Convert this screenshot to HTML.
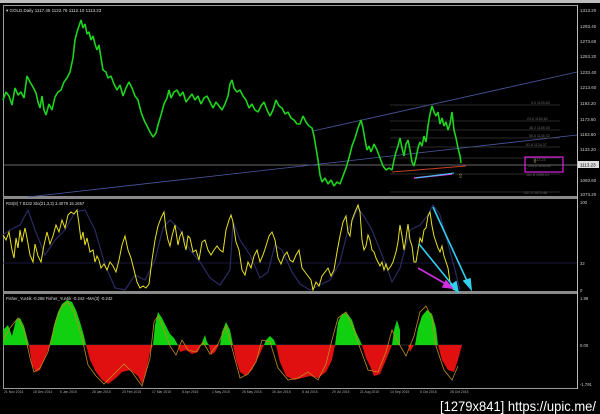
<!DOCTYPE html>
<html><head><meta charset="utf-8"><style>
html,body{margin:0;padding:0;background:#000;width:600px;height:414px;overflow:hidden}
svg{display:block}
text{font-family:"Liberation Sans",sans-serif}
</style></head><body>
<svg width="600" height="414" viewBox="0 0 600 414" xmlns="http://www.w3.org/2000/svg">
<rect width="600" height="414" fill="#000"/>
<rect x="0" y="0" width="600" height="3" fill="#bdbdbd"/>
<rect x="3.5" y="5.5" width="574" height="383" fill="none" stroke="#9a9a9a" stroke-width="1"/>
<rect x="3" y="196" width="575" height="3" fill="#8a8a8a"/>
<rect x="3" y="291" width="575" height="3" fill="#8a8a8a"/>
<line x1="577.5" y1="5" x2="577.5" y2="389" stroke="#bbb"/>

<text x="6" y="12" fill="#ddd" font-size="4.5">▾ GOLD,Daily  1117.45  1122.76  1112.10  1113.23</text>
<line x1="3" y1="165" x2="577" y2="165" stroke="#8a8a8a" stroke-width="0.8"/>
<line x1="28" y1="197" x2="577" y2="135" stroke="#4a5aa0" stroke-width="0.8"/>
<line x1="313" y1="131" x2="577" y2="72" stroke="#4a5aa0" stroke-width="0.8"/>
<g stroke="#555" stroke-width="0.6">
<line x1="390" y1="105" x2="560" y2="105"/><line x1="390" y1="121" x2="560" y2="121"/>
<line x1="390" y1="130" x2="560" y2="130"/><line x1="390" y1="138" x2="560" y2="138"/>
<line x1="390" y1="147" x2="560" y2="147"/><line x1="390" y1="158" x2="560" y2="158"/>
<line x1="390" y1="174" x2="560" y2="174"/><line x1="390" y1="192" x2="560" y2="192"/>
</g>
<g fill="#6a6a6a" font-size="3.6">
<text x="531" y="104">0.0  1193.83</text><text x="527" y="120">23.6  1163.62</text>
<text x="529" y="129">38.2  1155.00</text><text x="529" y="137">50.0  1145.32</text>
<text x="526" y="146">61.8  1134.37</text><text x="533" y="161">1113.23</text>
<text x="528" y="167">100.0  1103.09</text><text x="526" y="176">161.8  1090.21</text>
<text x="524" y="194">127.2  1071.46</text>
</g>
<line x1="392" y1="172" x2="466" y2="166" stroke="#c0402a" stroke-width="1"/>
<line x1="414" y1="178" x2="452" y2="174" stroke="#e040e0" stroke-width="1.5"/>
<line x1="416" y1="178" x2="454" y2="173" stroke="#30d0f0" stroke-width="1"/>
<rect x="525" y="157" width="38" height="15" fill="none" stroke="#e020e0" stroke-width="1.2"/>
<text x="458" y="178" fill="#c8b04a" font-size="6">⇧</text>
<text x="533" y="163" fill="#c8b04a" font-size="5">⇩</text>
<polyline fill="none" stroke="#1ed41e" stroke-width="1.6" stroke-linejoin="bevel" points="3,100 6,92 9,96 12,105 15,88 18,95 21,92 24,98 27,76 30,82 33,87 36,93 38,102 40,108 42,96 44,110 46,115 49,104 52,110 55,97 58,92 61,90 64,82 67,78 70,72 73,58 75,40 77,32 79,26 81,20 83,28 85,24 87,34 89,32 91,40 93,36 95,44 97,50 99,45 101,58 103,70 106,72 108,78 111,76 114,84 117,90 120,85 123,96 126,88 129,82 132,88 135,96 138,100 141,112 144,120 147,126 150,132 153,137 156,133 158,125 161,115 164,104 167,98 169,90 171,98 174,92 177,90 180,96 183,92 186,102 189,98 192,94 195,100 198,96 201,104 204,98 207,96 210,102 213,108 216,102 219,106 222,110 225,104 228,96 230,84 232,80 234,88 237,92 240,90 243,96 246,100 249,108 252,104 255,110 258,112 261,106 264,102 267,110 270,116 273,110 276,100 279,106 282,108 285,114 288,112 291,118 294,120 297,124 300,124 303,116 306,122 309,126 312,128 314,136 316,148 318,160 320,175 322,182 325,178 328,184 331,180 334,186 337,182 340,184 343,176 346,168 349,158 352,146 355,138 358,128 361,120 363,128 365,140 367,150 369,146 371,152 374,144 377,150 380,158 383,166 386,170 389,168 392,170 394,160 396,152 398,146 400,138 402,148 404,156 406,144 408,140 410,150 412,162 414,166 416,158 418,148 420,142 422,146 424,136 426,142 428,126 430,114 432,106 434,112 436,116 438,112 440,124 442,118 444,126 446,122 448,130 450,124 452,112 454,130 456,138 458,148 460,156 461,163"/>

<g fill="#ccc" font-size="4.5">
<text x="580" y="12">1313.20</text><text x="580" y="28">1293.40</text><text x="580" y="43">1273.60</text>
<text x="580" y="58">1253.20</text><text x="580" y="74">1233.40</text><text x="580" y="89">1213.60</text>
<text x="580" y="105">1193.20</text><text x="580" y="121">1173.60</text><text x="580" y="136">1153.60</text>
<text x="580" y="151">1133.20</text><text x="580" y="182">1093.60</text><text x="580" y="196">1073.20</text>
</g>
<rect x="578" y="161" width="21" height="7" fill="#ddd"/>
<text x="580" y="166.5" fill="#000" font-size="4.5">1113.23</text>

<text x="6" y="205" fill="#ddd" font-size="4.2">RSI(8) 7.8132  Sto(21,3,3) 3.4079 15.1657</text>
<line x1="3" y1="263" x2="577" y2="263" stroke="#202050" stroke-width="0.8"/>
<g fill="#ccc" font-size="4.2"><text x="580" y="204">100</text><text x="580" y="265">32</text><text x="580" y="292">0</text></g>
<polyline fill="none" stroke="#2a2a60" stroke-width="1.2" points="3,235 10,230 20,225 28,210 35,230 45,255 55,240 65,230 75,212 85,210 95,230 105,265 115,288 125,290 135,275 145,280 155,260 163,228 170,220 180,230 190,250 200,262 210,278 220,285 230,270 233,222 240,240 250,255 260,278 268,272 275,245 282,250 292,272 300,284 310,290 320,285 330,280 340,262 348,230 358,208 365,218 372,230 382,255 392,282 400,268 410,230 420,225 428,215 433,205 440,215 447,240 455,270 460,290"/>
<polyline fill="none" stroke="#e8e020" stroke-width="1" points="3,235 6,240 9,232 12,250 14,258 16,238 18,248 20,230 22,242 25,228 27,238 30,255 33,262 35,244 38,256 41,262 44,245 47,232 50,244 53,236 56,225 59,232 62,220 65,228 68,215 71,212 74,214 77,210 79,224 81,240 83,232 85,245 87,238 90,252 93,250 95,262 97,256 99,260 101,268 104,264 107,270 110,262 113,266 116,272 119,260 122,245 125,236 128,250 131,258 134,270 137,282 140,288 143,286 146,288 149,284 152,260 155,240 158,226 161,218 164,212 166,230 168,240 170,246 172,236 175,225 178,245 180,236 182,232 184,242 186,250 188,236 190,238 193,252 196,250 199,260 202,242 205,240 208,250 211,255 214,250 217,246 220,250 223,252 226,230 229,220 231,215 233,222 236,242 239,250 242,270 245,275 248,262 251,268 254,256 257,250 260,262 263,255 266,246 269,236 272,232 275,240 278,258 281,264 284,256 287,252 290,260 293,262 296,255 299,250 302,268 305,272 308,276 311,280 313,290 316,282 319,286 322,276 325,272 328,268 331,276 334,270 337,252 340,236 343,222 346,216 348,232 350,236 352,220 355,212 358,205 360,212 362,240 364,250 366,246 368,235 370,240 372,250 374,252 376,258 378,262 380,266 382,262 384,270 386,264 388,270 391,266 393,262 396,252 398,242 400,225 402,236 404,250 406,238 408,224 410,240 412,246 414,262 416,262 418,250 420,238 422,242 424,230 426,228 428,216 430,212 432,226 434,236 436,242 438,248 440,252 442,246 444,256 446,262 448,268 450,282 452,288 454,290"/>
<g stroke="#30d0f0" stroke-width="1.6" fill="#30d0f0">
<line x1="433" y1="207" x2="468" y2="283"/><polygon points="471,289 464,281 470,279"/>
<line x1="419" y1="244" x2="454" y2="287"/><polygon points="458,292 450,286 456,282"/>
</g>
<g stroke="#d030e0" stroke-width="1.6" fill="#d030e0">
<line x1="418" y1="268" x2="446" y2="284"/><polygon points="452,288 443,287 446,281"/>
</g>

<text x="6" y="300" fill="#ddd" font-size="4.2">Fisher_Yur4ik -0.288  Fisher_Yur4ik -0.242  ~MA(3) -0.242</text>
<g fill="#ccc" font-size="4.2"><text x="580" y="300">1.99</text><text x="580" y="347">0.00</text><text x="580" y="386">-1.791</text></g>
<line x1="3" y1="345" x2="462" y2="345" stroke="#555" stroke-width="0.5"/>
<g fill="#10d010">
<path d="M3,345 L3,330 L8,325 L12,336 L16,320 L20,318 L24,326 L29,345 Z"/>
<path d="M50,345 L54,325 L58,312 L62,304 L67,300 L72,302 L76,310 L80,322 L84,336 L86,345 Z"/>
<path d="M153,345 L155,325 L158,312 L162,318 L166,326 L170,334 L174,338 L178,345 Z"/>
<path d="M201,345 L203,340 L205,335 L207,342 L209,345 Z"/>
<path d="M220,345 L222,332 L226,322 L230,330 L233,345 Z"/>
<path d="M264,345 L266,340 L270,336 L274,340 L276,345 Z"/>
<path d="M335,345 L338,322 L342,314 L347,313 L352,320 L356,332 L362,345 Z"/>
<path d="M392,345 L394,330 L397,320 L400,330 L400,345 Z"/>
<path d="M415,345 L418,328 L422,316 L427,310 L432,314 L436,328 L438,345 Z"/>
</g>
<g fill="#e01010">
<path d="M29,345 L32,365 L36,372 L40,370 L44,360 L48,350 L50,345 Z"/>
<path d="M86,345 L90,360 L96,372 L102,380 L108,384 L116,378 L122,372 L130,370 L138,376 L142,384 L146,372 L150,352 L153,345 Z"/>
<path d="M178,345 L180,352 L186,350 L192,354 L198,352 L201,345 Z"/>
<path d="M209,345 L211,355 L215,352 L219,345 Z"/>
<path d="M233,345 L236,360 L240,372 L246,376 L252,370 L258,358 L264,345 Z"/>
<path d="M276,345 L280,362 L286,376 L294,380 L302,378 L310,376 L318,378 L326,372 L332,360 L335,345 Z"/>
<path d="M362,345 L366,358 L370,366 L374,376 L380,374 L386,360 L392,345 Z"/>
<path d="M408,345 L410,352 L414,345 Z"/>
<path d="M438,345 L442,360 L448,370 L454,372 L458,360 L462,345 Z"/>
</g>
<polyline fill="none" stroke="#c08a20" stroke-width="0.8" points="3,340 10,328 18,318 24,330 30,358 34,372 40,368 48,352 56,320 62,306 68,302 74,312 82,338 88,365 96,376 104,384 114,374 124,364 132,372 142,386 150,358 154,322 158,316 164,330 170,346 176,355 182,340 188,350 196,352 203,342 210,354 218,344 226,326 232,348 240,378 248,374 256,362 262,340 270,342 278,368 288,380 298,378 308,372 318,380 326,364 332,340 338,318 346,312 354,330 360,348 368,370 378,372 386,352 392,330 398,342 406,356 414,336 420,312 426,306 432,318 436,346 444,370 452,380 458,366"/>
<g fill="#aaa" font-size="3.4">
<text x="4" y="393">21 Nov 2014</text><text x="33" y="393">18 Dec 2014</text><text x="60" y="393">6 Jan 2015</text>
<text x="92" y="393">28 Jan 2015</text><text x="122" y="393">23 Feb 2015</text><text x="152" y="393">17 Mar 2015</text>
<text x="182" y="393">8 Apr 2015</text><text x="212" y="393">1 May 2015</text><text x="242" y="393">26 May 2015</text>
<text x="272" y="393">16 Jun 2015</text><text x="302" y="393">8 Jul 2015</text><text x="332" y="393">29 Jul 2015</text>
<text x="360" y="393">21 Aug 2015</text><text x="390" y="393">14 Sep 2015</text><text x="420" y="393">6 Oct 2015</text>
<text x="450" y="393">28 Oct 2015</text>
</g>
<text x="596" y="411" fill="#fff" font-size="14" text-anchor="end" font-family="Liberation Sans Narrow, Liberation Sans, sans-serif" textLength="156" lengthAdjust="spacingAndGlyphs">[1279x841] https://upic.me/</text>
</svg>
</body></html>
